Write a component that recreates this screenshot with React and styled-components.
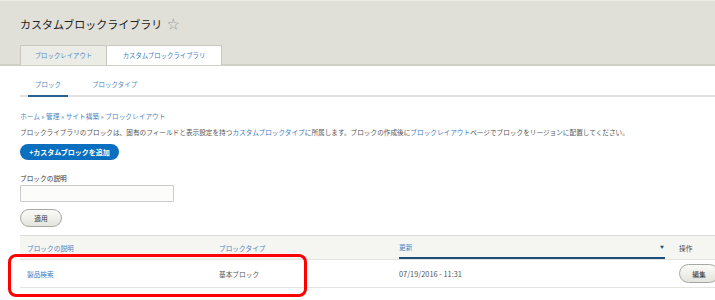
import React from 'react'
import styled, { createGlobalStyle } from 'styled-components'

const GlobalStyle = createGlobalStyle`
  html, body {
    margin: 0;
    padding: 0;
    background: #fff;
    overflow: hidden;
  }
  body {
    font-family: "Noto Sans CJK JP", "Liberation Sans", sans-serif;
    color: #555;
  }
`

const Page = styled.div`
  position: relative;
  width: 715px;
  height: 300px;
  overflow: hidden;
`

const Header = styled.div`
  background: #e0e0d8;
  border-top: 1px solid #ebebe6;
  border-bottom: 2px solid #cfcfc6;
  height: 63px;
  padding-left: 20px;
  display: flex;
  flex-direction: column;
  justify-content: space-between;
`

const Title = styled.h1`
  margin: 15px 0 0;
  font-size: 11px;
  font-weight: normal;
  color: #222;
  line-height: 16px;
  display: flex;
  align-items: center;
  gap: 5px;
`

const Star = styled.span`
  color: #999;
  font-size: 12px;
  line-height: 1;
`

const Tabs = styled.div`
  display: flex;
  align-items: flex-end;
  margin-bottom: -1px;
`

const Tab = styled.div`
  height: 20px;
  box-sizing: border-box;
  padding: 0;
  display: flex;
  align-items: center;
  justify-content: center;
  white-space: nowrap;
  font-size: 6.4px;
  color: ${p => (p.$active ? '#3a7bbf' : '#4f86c0')};
  background: ${p => (p.$active ? '#fff' : '#ecece6')};
  border: 1px solid #c8c8c0;
  border-bottom: none;
  border-left: ${p => (p.$active ? 'none' : '1px solid #c8c8c0')};
  border-radius: 2px 2px 0 0;
  width: ${p => p.$w}px;
`

const SubTabs = styled.div`
  margin-left: 20px;
  height: 29px;
  border-bottom: 2px solid #e2e2e2;
  display: flex;
  align-items: flex-end;
  gap: 17px;
`

const SubTab = styled.div`
  font-size: 6.5px;
  color: #4f86c0;
  padding: 0 7px 6px;
  margin-bottom: -2px;
  border-bottom: 2px solid ${p => (p.$active ? '#2c5f92' : 'transparent')};
  &:first-child {
    margin-left: 8px;
  }
`

const Content = styled.div`
  padding: 14px 0 0 20px;
`

const Breadcrumb = styled.div`
  font-size: 6.7px;
  line-height: 10px;
  color: #4f86c0;
`

const Description = styled.p`
  margin: 6px 0 0;
  font-size: 6.65px;
  line-height: 10px;
  color: #555;
  white-space: nowrap;
`

const Link = styled.a`
  color: #3a7bc4;
  text-decoration: none;
`

const AddButton = styled.button`
  margin-top: 7px;
  height: 16px;
  width: 99px;
  border: none;
  border-radius: 9px;
  background: #0a6fbf;
  color: #fff;
  font-family: inherit;
  font-size: 7px;
  font-weight: bold;
  padding: 0;
  display: block;
`

const Label = styled.div`
  margin-top: 13px;
  font-size: 6.7px;
  line-height: 10px;
  color: #333;
`

const Input = styled.div`
  margin-top: 2px;
  width: 154px;
  height: 17px;
  box-sizing: border-box;
  border: 1px solid #ccc;
  border-radius: 1px;
  background: #fcfcfa;
`

const PillButton = styled.button`
  height: ${p => p.$h || 18}px;
  width: ${p => p.$w}px;
  box-sizing: border-box;
  border: 1px solid #a8a8a3;
  border-radius: 10px;
  background: linear-gradient(#fafaf8, #e4e4de);
  font-family: inherit;
  font-size: 6.7px;
  color: #333;
  padding: 0;
  display: block;
`

const ApplyRow = styled.div`
  display: flex;
  margin-top: 7px;
`

const Table = styled.div`
  margin-top: 8px;
  display: grid;
  grid-template-columns: 192px 180px 280px 60px;
  width: 712px;
`

const Cell = styled.div`
  padding: 0 7px;
  height: ${p => (p.$head ? 25 : 28)}px;
  box-sizing: border-box;
  display: flex;
  align-items: center;
  font-size: ${p => p.$size || 6.7}px;
  background: ${p => (p.$head ? '#f5f5f2' : '#fff')};
  border-top: ${p => (p.$head ? '1px solid #dcdcd6' : 'none')};
  border-bottom: 1px solid #e4e4e0;
  color: ${p => p.$color || '#555'};
`

const SortHead = styled.div`
  flex: 1;
  height: 100%;
  box-sizing: border-box;
  display: flex;
  align-items: center;
  justify-content: space-between;
  border-bottom: 2px solid #1d4f7c;
  color: #4f86c0;
`

const Arrow = styled.span`
  font-size: 4px;
  color: #1d4f7c;
  margin-right: 1px;
`

const Highlight = styled.div`
  position: absolute;
  left: 8px;
  top: 254px;
  width: 299px;
  height: 43px;
  box-sizing: border-box;
  border: 3px solid #f00;
  border-radius: 8px;
  pointer-events: none;
`

export default function App() {
  return (
    <Page>
      <GlobalStyle />
      <Header>
        <Title>
          カスタムブロックライブラリ <Star>☆</Star>
        </Title>
        <Tabs>
          <Tab $w={87}>ブロックレイアウト</Tab>
          <Tab $w={115} $active>カスタムブロックライブラリ</Tab>
        </Tabs>
      </Header>
      <SubTabs>
        <SubTab $active>ブロック</SubTab>
        <SubTab>ブロックタイプ</SubTab>
      </SubTabs>
      <Content>
        <Breadcrumb>ホーム » 管理 » サイト構築 » ブロックレイアウト</Breadcrumb>
        <Description>
          ブロックライブラリのブロックは、固有のフィールドと表示設定を持つ
          <Link>カスタムブロックタイプ</Link>
          に所属します。ブロックの作成後に<Link>ブロックレイアウト</Link>
          ページでブロックをリージョンに配置してください。
        </Description>
        <AddButton>+カスタムブロックを追加</AddButton>
        <Label>ブロックの説明</Label>
        <Input />
        <ApplyRow>
          <PillButton $w={42}>適用</PillButton>
        </ApplyRow>
        <Table>
          <Cell $head $color="#4f86c0">ブロックの説明</Cell>
          <Cell $head $color="#4f86c0">ブロックタイプ</Cell>
          <Cell $head>
            <SortHead>
              更新 <Arrow>▼</Arrow>
            </SortHead>
          </Cell>
          <Cell $head $color="#444">操作</Cell>
          <Cell $color="#3a7bc4">製品検索</Cell>
          <Cell>基本ブロック</Cell>
          <Cell $size={7.4}>07/19/2016 - 11:31</Cell>
          <Cell>
            <PillButton $w={40} $h={19}>編集</PillButton>
          </Cell>
        </Table>
      </Content>
      <Highlight />
    </Page>
  )
}
